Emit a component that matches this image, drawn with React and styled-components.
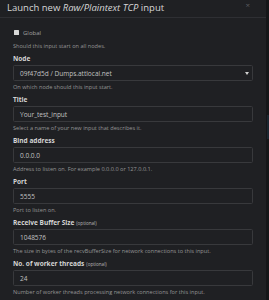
import React from "react";
import styled, { createGlobalStyle } from "styled-components";

const Global = createGlobalStyle`
  html, body { margin: 0; padding: 0; background: #151618; }
  body { font-family: "Open Sans", "Liberation Sans", sans-serif; overflow: hidden; }
  * { box-sizing: border-box; }
`;

const Page = styled.div`
  display: flex;
  height: 300px;
  overflow: hidden;
`;

const Modal = styled.div`
  width: 266px;
  height: 300px;
  background: #1f2023;
  display: flex;
  flex-direction: column;
  overflow: hidden;
`;

const Gutter = styled.div`
  flex: 1;
  display: flex;
  flex-direction: column;
  padding-top: 115px;
`;

const ScrollHint = styled.div`
  width: 2px;
  height: 24px;
  margin-left: 1px;
  background: #1b2630;
`;

const Header = styled.div`
  height: 21px;
  border-bottom: 1px solid #2e2f33;
  display: flex;
  align-items: flex-start;
  justify-content: space-between;
  padding: 1px 16px 0 7px;
`;

const Title = styled.h4`
  margin: 0;
  font-size: 9.5px;
  line-height: 13px;
  font-weight: 400;
  color: #d6d6d6;
  em { font-style: italic; }
`;

const Close = styled.span`
  font-size: 8px;
  line-height: 8px;
  color: #5c5d60;
`;

const Body = styled.div`
  padding: 10.5px 13px 0 13px;
  display: flex;
  flex-direction: column;
`;

const CheckRow = styled.label`
  display: flex;
  align-items: center;
  gap: 4px;
  height: 9px;
  padding-left: 1px;
  font-size: 6px;
  color: #a0a0a0;
`;

const Box = styled.span`
  width: 5px;
  height: 5px;
  background: #d8d8d8;
  border-radius: 0.5px;
`;

const Group = styled.div`
  display: flex;
  flex-direction: column;
  margin-bottom: ${(p) => p.$mb ?? 4}px;
`;

const Label = styled.div`
  font-size: 6.5px;
  line-height: 9px;
  height: 9px;
  font-weight: 700;
  color: #d4d4d4;
  margin-bottom: 2px;
  white-space: nowrap;
`;

const Optional = styled.span`
  font-size: 4.6px;
  font-weight: 400;
  color: #b8b8b8;
  margin-left: 2px;
`;

const Field = styled.div`
  height: 16px;
  border: 1px solid #38393c;
  border-radius: 1.5px;
  display: flex;
  align-items: center;
  justify-content: space-between;
  padding: 0 3px 0 6px;
  font-size: 6.5px;
  color: #c2c2c2;
  background: #1f2023;
`;

const Help = styled.div`
  margin-top: ${(p) => p.$mt ?? 2}px;
  font-size: 5.6px;
  line-height: 8px;
  height: 8px;
  color: #959595;
  white-space: nowrap;
`;

const Caret = () => (
  <svg width="4" height="3" viewBox="0 0 4 3">
    <path d="M0 0 H4 L2 3 Z" fill="#d0d0d0" />
  </svg>
);

const fields = [
  { label: "Title", value: "Your_test_input", help: "Select a name of your new input that describes it." },
  { label: "Bind address", value: "0.0.0.0", help: "Address to listen on. For example 0.0.0.0 or 127.0.0.1." },
  { label: "Port", value: "5555", help: "Port to listen on." },
  { label: "Receive Buffer Size", optional: true, value: "1048576", help: "The size in bytes of the recvBufferSize for network connections to this input." },
  { label: "No. of worker threads", optional: true, value: "24", help: "Number of worker threads processing network connections for this input." },
];

export default function App() {
  return (
    <>
      <Global />
      <Page>
        <Modal>
          <Header>
            <Title>
              Launch new <em>Raw/Plaintext TCP</em> input
            </Title>
            <Close>×</Close>
          </Header>
          <Body>
            <Group $mb={4.5}>
              <CheckRow>
                <Box />
                Global
              </CheckRow>
              <Help $mt={4.5}>Should this input start on all nodes.</Help>
            </Group>
            <Group>
              <Label>Node</Label>
              <Field>
                <span>09f47d5d / Dumps.attlocal.net</span>
                <Caret />
              </Field>
              <Help>On which node should this input start.</Help>
            </Group>
            {fields.map((f) => (
              <Group key={f.label}>
                <Label>
                  {f.label}
                  {f.optional && <Optional>(optional)</Optional>}
                </Label>
                <Field>{f.value}</Field>
                <Help>{f.help}</Help>
              </Group>
            ))}
          </Body>
        </Modal>
        <Gutter>
          <ScrollHint />
        </Gutter>
      </Page>
    </>
  );
}
